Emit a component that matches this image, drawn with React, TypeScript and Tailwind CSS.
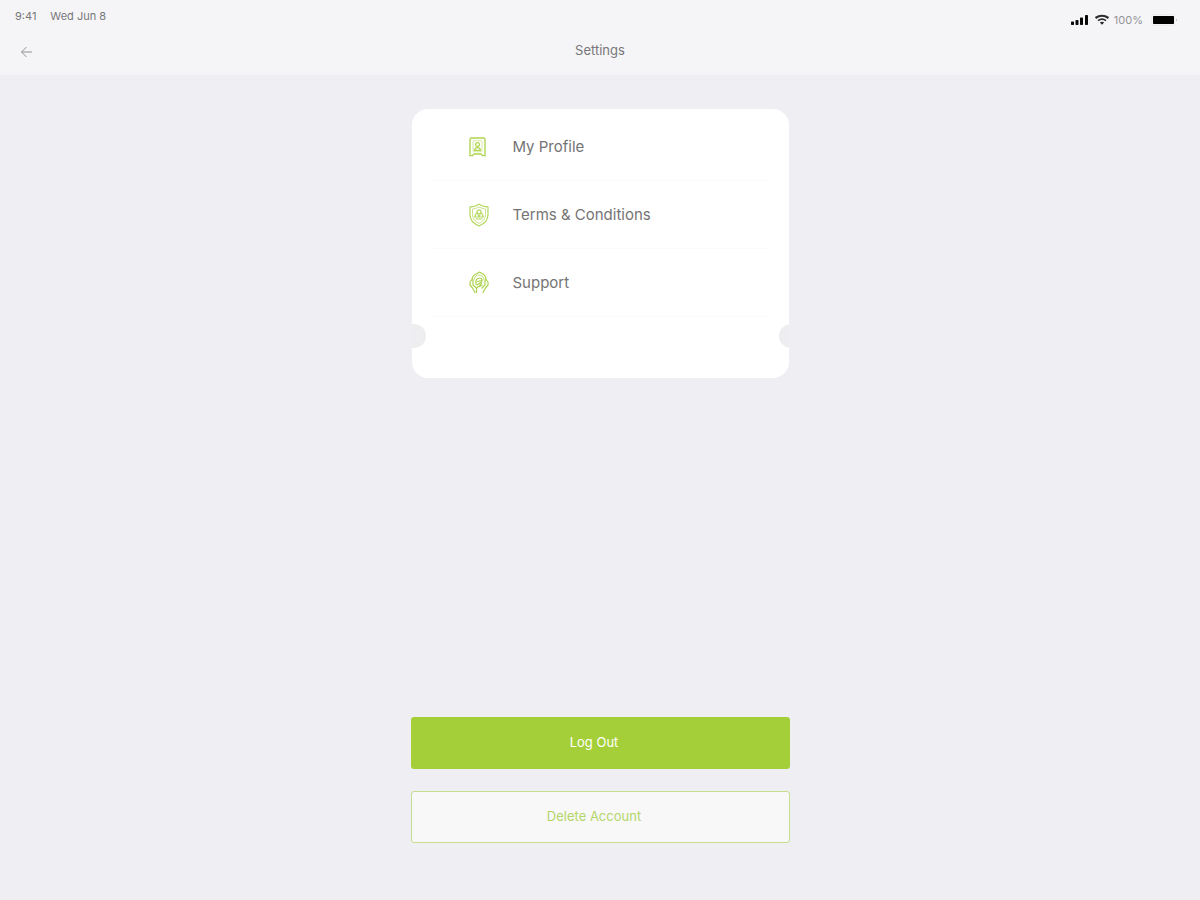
import type { ReactNode } from "react";

function ProfileIcon() {
  return (
    <svg viewBox="0 0 20 22" className="h-[22px] w-5" fill="none" stroke="#b0d552" strokeWidth="1.4" aria-hidden="true">
      <path d="M2 18.500V3.500Q2 2 3.500 2H15.500Q17 2 17 3.500V18.500" />
      <path d="M1 19.500H4.500L6 18H13L14.500 19.500H18" strokeWidth="1.300" />
      <rect x="5" y="4.800" width="9" height="11" rx="0.800" strokeWidth="0.900" opacity="0.600" />
      <circle cx="9.500" cy="8.500" r="1.900" strokeWidth="1.200" />
      <path d="M6.500 14.300Q6.800 11.600 9.500 11.600T12.500 14.300Z" strokeWidth="1.200" />
    </svg>
  );
}

function ShieldIcon() {
  return (
    <svg viewBox="0 0 22 24" className="h-6 w-[22px]" fill="none" stroke="#b4d75e" strokeWidth="1.200" strokeLinejoin="round" aria-hidden="true">
      <path d="M11 1.200Q6 4 2 3.800V11.500C2 17.500 5.500 20.800 11 23C16.500 20.800 20 17.500 20 11.500V3.800Q16 4 11 1.200Z" />
      <path d="M11 4Q7.500 5.800 4.500 6V11.500C4.500 16 7 18.500 11 20.300C15 18.500 17.500 16 17.500 11.500V6Q14.500 5.800 11 4Z" strokeWidth="0.700" />
      <circle cx="11" cy="8.800" r="2" />
      <path d="M8.600 9.500L6.500 14H15.500L13.400 9.500M9.500 11.500L11 13.500L12.500 11.500M7.500 16H14.500" />
    </svg>
  );
}

function SupportIcon() {
  return (
    <svg viewBox="0 0 22 24" className="h-6 w-[22px]" fill="none" stroke="#aed350" strokeWidth="1.200" strokeLinecap="round" strokeLinejoin="round" aria-hidden="true">
      <path d="M4 9C4 5.500 6.500 3.500 9 2.500L11.500 1L14 2.500C16.500 3.500 18 5.500 18 9" />
      <path d="M6 8.500C6.500 5.500 8.500 4 11 4S15.500 5.500 16 8.500" strokeWidth="0.800" />
      <path d="M4 8.500L2 11V14L4.500 17L7 21.500M5 9V14L8.500 17V21.500" />
      <path d="M18 8.500L20 11V14L17.500 17L15 21.500M17 9V14L14 17" />
      <path d="M8 13.500V9.500Q9 7 11.500 7T14 9.500Q14 12 11.500 15L8.500 17" />
      <path d="M9.500 10.500L13.500 9.500M9 14L12.500 11.500M11.500 15.500L14 14" />
    </svg>
  );
}

function StatusBar() {
  return (
    <div className="flex items-start justify-between pl-[15px] pr-[22px] pt-2">
      <div className="flex gap-3.5 text-[11px] leading-4 text-[#77777a]">
        <span>9:41</span>
        <span>Wed Jun 8</span>
      </div>
      <div className="flex items-center pt-1">
        <svg viewBox="0 0 18 12" className="h-3 w-[18px]" fill="#0a0a0a" role="img" aria-label="Signal">
          <rect x="1" y="7.500" width="3" height="3.500" rx="0.700" />
          <rect x="5.500" y="6" width="3" height="5" rx="0.700" />
          <rect x="10" y="3.500" width="3" height="7.500" rx="0.700" />
          <rect x="15" y="1" width="3" height="10" rx="0.700" />
        </svg>
        <svg viewBox="0 0 16 12" className="ml-1.5 h-3 w-4" fill="none" stroke="#2c2c2c" aria-label="Wi-Fi" role="img">
          <path d="M1.500 4Q8 -0.500 14.500 4" strokeWidth="2.200" />
          <path d="M4 6.600Q8 3.800 12 6.600" strokeWidth="1.700" />
          <path d="M5.800 8.600Q8 7 10.200 8.600L8 10.700Z" fill="#2c2c2c" stroke="none" />
        </svg>
        <span className="ml-1 text-[11px] leading-4 text-[#949497]">100%</span>
        <svg viewBox="0 0 27 12" className="ml-2 h-3 w-[27px]" role="img" aria-label="Battery">
          <rect x="0.500" y="0.500" width="23" height="11" rx="2" fill="none" stroke="#ececee" />
          <rect x="2" y="2" width="21" height="8" rx="0.800" fill="#000" />
          <path d="M25 4.500Q27 6 25 7.500Z" fill="#bcbcbe" />
        </svg>
      </div>
    </div>
  );
}

function MenuRow({ icon, label }: { icon: ReactNode; label: string }) {
  return (
    <li className="border-b border-[#fbfbfb]">
      <a href="#" className="flex h-[67px] items-center pl-9">
        <span className="flex w-[45px] shrink-0">{icon}</span>
        <span className="text-[15px] leading-5 text-[#747474]">{label}</span>
      </a>
    </li>
  );
}

export default function App() {
  return (
    <div className="flex min-h-screen flex-col bg-[#eeeef3] font-['Inter',sans-serif]">
      <header className="bg-[#f5f5f7] pb-[15px]">
        <StatusBar />
        <div className="grid grid-cols-[1fr_auto_1fr] items-end pt-3">
          <button type="button" aria-label="Back" className="ml-5 w-3.5 pb-0.5">
            <svg viewBox="0 0 14 12" className="h-3 w-3.5" fill="none" stroke="#929295" aria-hidden="true">
              <path d="M6.500 1L1.500 6L6.500 11M1.500 6H12" />
            </svg>
          </button>
          <h1 className="text-[13px] leading-5 text-[#77777a]">Settings</h1>
        </div>
      </header>

      <main className="mx-auto flex w-full max-w-[379px] flex-1 flex-col justify-between pb-[57px] pt-[34px]">
        <nav aria-label="Settings" className="relative mx-px overflow-hidden rounded-2xl bg-white px-5 pb-[61px] pt-1">
          <ul>
            <MenuRow icon={<ProfileIcon />} label="My Profile" />
            <MenuRow icon={<ShieldIcon />} label="Terms &amp; Conditions" />
            <MenuRow icon={<SupportIcon />} label="Support" />
          </ul>
          <span className="absolute -left-2.5 bottom-[30px] size-6 rounded-full bg-[#eeeef1]" />
          <span className="absolute -right-3.5 bottom-[30px] size-6 rounded-full bg-[#eeeef1]" />
        </nav>

        <div className="flex flex-col gap-[22px] pt-10 text-[13px] leading-5">
          <button type="button" className="h-[52px] rounded-[3px] bg-[#a5cf38] pb-0.5 pr-3 text-white">
            Log Out
          </button>
          <button type="button" className="h-[52px] rounded-[3px] border border-[#c5dd8c] bg-[#f8f8f8] pb-0.5 pr-3 text-[#b4d56a]">
            Delete Account
          </button>
        </div>
      </main>
    </div>
  );
}
